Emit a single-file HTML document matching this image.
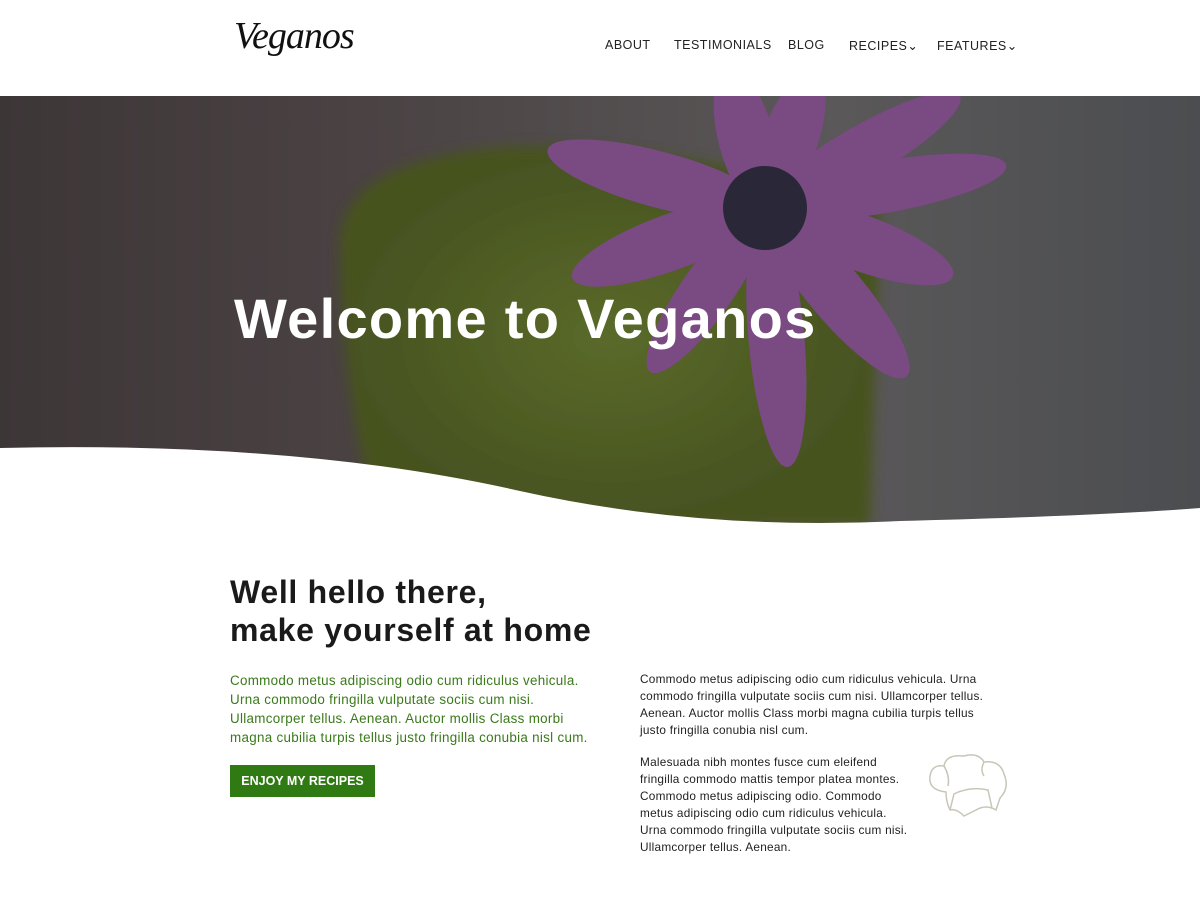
<!DOCTYPE html>
<html><head><meta charset="utf-8"><style>
*{margin:0;padding:0;box-sizing:border-box}
body{width:1200px;height:900px;overflow:hidden;background:#fff;font-family:"Liberation Sans",sans-serif;color:#222;position:relative}
.logo{position:absolute;left:234px;top:14px;font-family:"Liberation Serif",serif;font-style:italic;font-size:38px;color:#111;letter-spacing:-1px}
nav{position:absolute;top:38px;font-size:12.5px;color:#222;letter-spacing:.5px}
nav span{position:absolute;white-space:nowrap}
.hero{position:absolute;left:0;top:96px;width:1200px;height:430px;overflow:hidden;background:linear-gradient(90deg,#3d3637 0%,#4a4243 30%,#5a5859 70%,#4b4d50 100%)}
h1{position:absolute;left:234px;top:286px;color:#fff;font-size:56px;font-weight:bold;letter-spacing:1.3px;white-space:nowrap}
h2{position:absolute;left:230px;top:573px;font-size:32px;line-height:38px;font-weight:bold;color:#1a1a1a;letter-spacing:.7px;white-space:nowrap}
.p1{position:absolute;left:230px;top:671px;font-size:13.4px;line-height:19px;color:#3a7a1a;white-space:nowrap;letter-spacing:.3px}
.p2,.p3{position:absolute;left:640px;font-size:11.8px;line-height:17px;color:#222;white-space:nowrap;letter-spacing:.25px}
.p2{top:671px}.p3{top:754px}
.btn{position:absolute;left:230px;top:765px;width:145px;height:32px;background:#2f7a12;color:#fff;font-size:12.5px;font-weight:bold;line-height:32px;text-align:center}
</style></head><body>
<div class="logo">Veganos</div>
<nav><span style="left:605px">ABOUT</span><span style="left:674px">TESTIMONIALS</span><span style="left:788px">BLOG</span><span style="left:849px">RECIPES⌄</span><span style="left:937px">FEATURES⌄</span></nav>
<div class="hero">
<svg width="1200" height="430" style="position:absolute;left:0;top:0">
<defs><radialGradient id="g" cx="50%" cy="50%" r="50%"><stop offset="0" stop-color="#5a6a2a"/><stop offset="1" stop-color="#46521f"/></radialGradient>
<filter id="b"><feGaussianBlur stdDeviation="6"/></filter></defs>
<path d="M340 140 Q350 60 520 50 Q700 50 880 110 L870 430 L380 430 Q340 300 340 140Z" fill="url(#g)" filter="url(#b)"/>
<g fill="#7a4a82" transform="translate(765,112)">
<ellipse cx="0" cy="-70" rx="28" ry="75" transform="rotate(-15)"/>
<ellipse cx="0" cy="-70" rx="28" ry="75" transform="rotate(20)"/>
<ellipse cx="0" cy="-110" rx="26" ry="115" transform="rotate(60)"/>
<ellipse cx="0" cy="-120" rx="26" ry="125" transform="rotate(80)"/>
<ellipse cx="0" cy="-110" rx="28" ry="115" transform="rotate(-75)"/>
<ellipse cx="0" cy="-100" rx="28" ry="105" transform="rotate(-110)"/>
<ellipse cx="0" cy="-100" rx="26" ry="100" transform="rotate(-145)"/>
<ellipse cx="0" cy="-130" rx="28" ry="130" transform="rotate(175)"/>
<ellipse cx="0" cy="-110" rx="28" ry="110" transform="rotate(140)"/>
<ellipse cx="0" cy="-100" rx="28" ry="100" transform="rotate(110)"/>
<circle r="42" fill="#2a2838"/>
</g>
<path d="M0 352 Q300 345 520 395 Q700 435 900 425 Q1100 420 1200 412 L1200 430 L0 430Z" fill="#fff"/>
</svg>
</div>
<h1>Welcome to Veganos</h1>
<h2>Well hello there,<br>make yourself at home</h2>
<div class="p1">Commodo metus adipiscing odio cum ridiculus vehicula.<br>Urna commodo fringilla vulputate sociis cum nisi.<br>Ullamcorper tellus. Aenean. Auctor mollis Class morbi<br>magna cubilia turpis tellus justo fringilla conubia nisl cum.</div>
<div class="btn">ENJOY MY RECIPES</div>
<div class="p2">Commodo metus adipiscing odio cum ridiculus vehicula. Urna<br>commodo fringilla vulputate sociis cum nisi. Ullamcorper tellus.<br>Aenean. Auctor mollis Class morbi magna cubilia turpis tellus<br>justo fringilla conubia nisl cum.</div>
<div class="p3">Malesuada nibh montes fusce cum eleifend<br>fringilla commodo mattis tempor platea montes.<br>Commodo metus adipiscing odio. Commodo<br>metus adipiscing odio cum ridiculus vehicula.<br>Urna commodo fringilla vulputate sociis cum nisi.<br>Ullamcorper tellus. Aenean.</div>
<svg width="85" height="70" viewBox="0 0 85 70" style="position:absolute;left:926px;top:752px" fill="none" stroke="#c8c6b8" stroke-width="1.5">
<path d="M20 40 Q2 38 4 24 Q6 12 18 14 Q20 2 38 4 Q52 0 58 10 Q74 8 78 22 Q84 36 74 46 L70 58 Q60 52 50 58 L38 64 Q30 56 24 58 Q20 50 20 40Z"/>
<path d="M24 58 L28 42 Q44 34 62 38 L66 56"/>
<path d="M18 14 Q24 24 22 34"/>
<path d="M58 10 Q54 18 58 24"/>
</svg>
</body></html>
